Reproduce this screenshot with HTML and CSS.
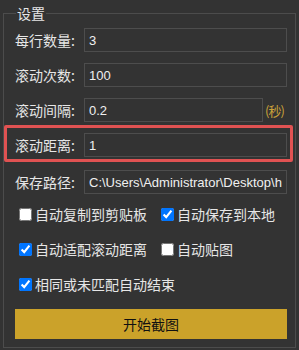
FILE: index.html
```html
<!DOCTYPE html>
<html lang="zh-CN">

<head>
    <meta charset="UTF-8">
    <meta name="viewport" content="width=device-width, initial-scale=1.0">
    <title>设置</title>

    <link rel="stylesheet" href="styles.css">
</head>

<body>
    <fieldset class="group">
        <legend>设置</legend>

        <div class="row">
            <label for="perRow">每行数量:</label>
            <input type="text" id="perRow" value="3">
        </div>

        <div class="row">
            <label for="scrollTimes">滚动次数:</label>
            <input type="text" id="scrollTimes" value="100">
        </div>

        <div class="row">
            <label for="interval">滚动间隔:</label>
            <input type="text" id="interval" class="short" value="0.2">
            <span class="unit">(秒)</span>
        </div>

        <div class="row highlight">
            <label for="distance">滚动距离:</label>
            <input type="text" id="distance" value="1">
        </div>

        <div class="row path">
            <label for="savePath">保存路径:</label>
            <input type="text" id="savePath" value="C:\Users\Administrator\Desktop\history">
        </div>

        <div class="checks">
            <label class="check"><input type="checkbox">自动复制到剪贴板</label>
            <label class="check"><input type="checkbox" checked>自动保存到本地</label>
            <label class="check"><input type="checkbox" checked>自动适配滚动距离</label>
            <label class="check"><input type="checkbox">自动贴图</label>
            <label class="check wide"><input type="checkbox" checked>相同或未匹配自动结束</label>
        </div>

        <button class="button" type="button">开始截图</button>
    </fieldset>
</body>

</html>
```

FILE: styles.css
```css
body {
    font-family: "Noto Sans CJK SC", "Liberation Sans", sans-serif;
    font-size: 14px;
    background-color: #333333;
    color: #e6e6e6;
    margin: 0;
}

.group {
    margin: 3px 3px 2px 3px;
    border: 1px solid #4c4c4c;
    padding: 5px 8px 8px 11px;
    min-width: 0;
}

.group legend {
    padding: 0 1px;
    margin-left: 1px;
    line-height: 20px;
    color: #e6e6e6;
}

.row {
    display: flex;
    align-items: center;
    height: 24px;
    margin-bottom: 11px;
    position: relative;
}

.row label {
    width: 69px;
    flex-shrink: 0;
    line-height: 24px;
}

.row input {
    flex: 1;
    min-width: 0;
    height: 24px;
    box-sizing: border-box;
    padding: 0 4px;
    border: 1px solid #4d4d4d;
    background-color: #333333;
    color: #f0f0f0;
    font-family: "Liberation Sans", Arial, sans-serif;
    font-size: 13px;
    outline: none;
}

.row input.short {
    flex: 0 0 179px;
}

.unit {
    color: #c9a13a;
    font-size: 13px;
    margin-left: 2px;
    letter-spacing: -1px;
}

/* red box drawn over the row */
.highlight::after {
    content: "";
    position: absolute;
    left: -11px;
    right: -6px;
    top: -8px;
    bottom: -5px;
    border: 3px solid #e05252;
    border-radius: 2px;
    pointer-events: none;
}

.path {
    margin-top: 13px;
    margin-bottom: 8px;
}

.checks {
    display: grid;
    grid-template-columns: 142px 1fr;
    row-gap: 11px;
}

.check {
    display: flex;
    align-items: center;
    height: 24px;
    white-space: nowrap;
}

.check input {
    width: 13px;
    height: 13px;
    margin: 0 3px 0 4px;
}

.check.wide {
    grid-column: 1 / 3;
}

.button {
    display: block;
    width: 100%;
    height: 30px;
    margin-top: 13px;
    border: none;
    background-color: #cba22a;
    color: #111;
    font-family: "Noto Sans CJK SC", sans-serif;
    font-size: 14px;
    cursor: pointer;
}
```
